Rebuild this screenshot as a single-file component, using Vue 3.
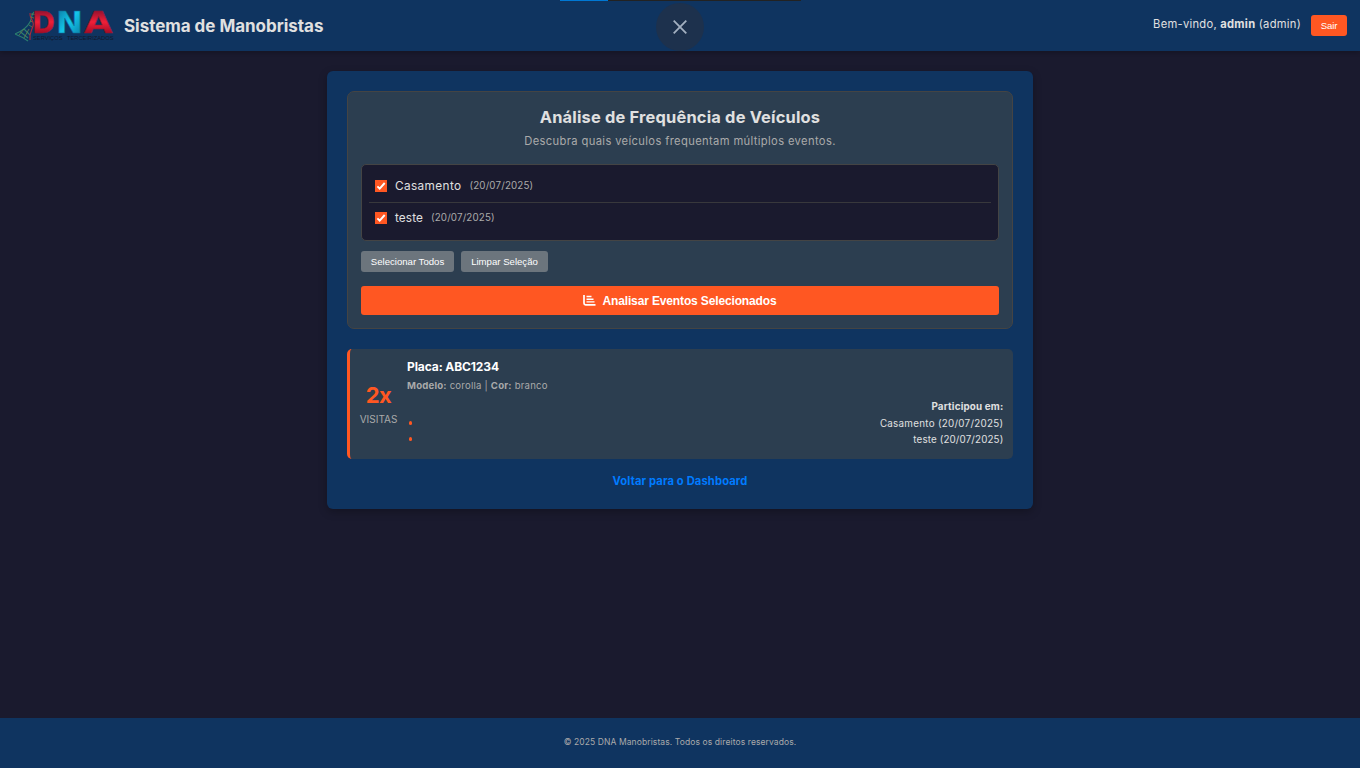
<script setup>
const events = [
  { name: 'Casamento', date: '(20/07/2025)', key: 'casamento' },
  { name: 'teste', date: '(20/07/2025)', key: 'teste' },
]
</script>

<template>
  <div class="page">
    <header class="topbar">
      <div class="brand">
        <svg class="logo" width="102" height="51" viewBox="13 0 102 51">
          <defs>
            <linearGradient id="red" x1="0" y1="0" x2="0" y2="1">
              <stop offset=".2" stop-color="#9c1230" />
              <stop offset=".5" stop-color="#f02038" />
              <stop offset=".8" stop-color="#a80d26" />
            </linearGradient>
            <linearGradient id="cyan" x1="0" y1="0" x2="1" y2="1">
              <stop offset=".1" stop-color="#0b7ca5" />
              <stop offset=".5" stop-color="#14c6ea" />
              <stop offset=".9" stop-color="#0a7fa8" />
            </linearGradient>
          </defs>
          <path d="M15 34C22 31 27 28 30 22C32 18 31 15 34 12M15 34C20 36 24 38 28 41M20 31.500L28 38M24 29L30 35" fill="none" stroke="#2b7f6f" stroke-width="1.1" />
          <path d="M29 25L32 27M30 21L33 22M30 17L34 18M31 14L35 14.500M19 35L24 29M24 38L29 29" stroke="#6b7d4b" stroke-width=".8" />
          <path d="M30 13C29 18 35 21 33 26C32 30 29 33 30 40" fill="none" stroke="#a82a3c" stroke-width="1.1" />
          <g class="logo-letters">
            <text x="32" y="32.500" textLength="23" lengthAdjust="spacingAndGlyphs" fill="url(#red)" stroke="#8f1630">D</text>
            <text x="56" y="32.500" textLength="27" lengthAdjust="spacingAndGlyphs" fill="url(#cyan)" stroke="#0d6d96">N</text>
            <text x="84" y="32.500" textLength="28.500" lengthAdjust="spacingAndGlyphs" fill="url(#red)" stroke="#8f1630">A</text>
          </g>
          <text class="logo-sub" x="33" y="40" textLength="29.500" lengthAdjust="spacingAndGlyphs">SERVIÇOS</text>
          <text class="logo-sub" x="67" y="40" textLength="46.500" lengthAdjust="spacingAndGlyphs">TERCEIRIZADOS</text>
        </svg>
        <h1 class="site-title">Sistema de Manobristas</h1>
      </div>
      <div class="user">
        <span class="welcome">Bem-vindo, <strong>admin</strong> (admin)</span>
        <button class="logout">Sair</button>
      </div>
      <div class="progress"><div class="progress-value"></div></div>
      <div class="close">
        <svg width="14" height="14" viewBox="0 0 14 14"><path d="M.7.7l12.6 12.6M13.3.7L.7 13.3" stroke="#a3b0c1" stroke-width="1.8" /></svg>
      </div>
    </header>

    <main class="content">
      <section class="card">
        <div class="panel">
          <h2 class="panel-title">Análise de Frequência de Veículos</h2>
          <p class="panel-text">Descubra quais veículos frequentam múltiplos eventos.</p>
          <div class="event-list">
            <label v-for="e in events" :key="e.key" class="event">
              <svg class="check" width="12" height="12" viewBox="0 0 12 12"><rect width="12" height="12" fill="#ff5722" /><path d="M2.4 6.4l2.3 2.3 5-5.7" fill="none" stroke="#fff" stroke-width="1.9" /></svg>
              <span :class="['event-name', e.key]">{{ e.name }}</span>
              <span class="event-date">{{ e.date }}</span>
            </label>
          </div>
          <div class="actions">
            <button class="small-btn all">Selecionar Todos</button>
            <button class="small-btn clear">Limpar Seleção</button>
          </div>
          <button class="analyze">
            <svg width="13" height="12" viewBox="0 0 13 12"><path d="M1 0V8.2Q1 9.8 2.6 9.8H12.5" fill="none" stroke="#fff" stroke-width="1.7" /><path d="M3.5 1.5H8.5M3.5 4.2H10.5M3.5 6.9H11.5" stroke="#fff" stroke-width="1.4" /></svg>
            <span>Analisar Eventos Selecionados</span>
          </button>
        </div>

        <article class="result">
          <div class="visits">
            <span class="count">2x</span>
            <span class="visits-label">VISITAS</span>
          </div>
          <div class="details">
            <h3 class="plate">Placa: ABC1234</h3>
            <p class="model"><strong>Modelo:</strong> corolla | <strong>Cor:</strong> branco</p>
            <div class="joined">
              <strong class="joined-title">Participou em:</strong>
              <ul>
                <li v-for="e in events" :key="e.key" :class="e.key"><i class="dot"></i><span>{{ e.name }} {{ e.date }}</span></li>
              </ul>
            </div>
          </div>
        </article>

        <a class="back">Voltar para o Dashboard</a>
      </section>
    </main>

    <footer class="footer">© 2025 DNA Manobristas. Todos os direitos reservados.</footer>
  </div>
</template>

<style>
body { margin: 0; background: #1a1a2e; }
</style>

<style scoped>
* { box-sizing: border-box; }
.page { height: 768px; display: flex; flex-direction: column; background: #1a1a2e; color: #e0e0e0; font-family: Inter, "Open Sans", sans-serif; overflow: hidden; }
h1, h2, h3, p, ul { margin: 0; padding: 0; }
button { border: 0; padding: 0; color: #fff; font-family: "Liberation Sans", Arial, sans-serif; white-space: nowrap; }
.topbar { position: relative; height: 51px; flex: none; display: flex; justify-content: space-between; align-items: center; padding: 0 13px; background: #0f3460; box-shadow: 0 2px 4px rgba(0, 0, 0, .2); }
.brand { display: flex; align-items: center; gap: 9px; }
.logo { display: block; }
.logo-letters { font: bold 30px "DejaVu Sans", sans-serif; stroke-width: .5px; }
.logo-sub { font: 6px "Liberation Sans", sans-serif; fill: #12182b; }
.site-title { font-size: 17px; line-height: 26px; font-weight: 700; letter-spacing: -.03px; white-space: nowrap; }
.user { display: flex; align-items: center; gap: 10px; }
.welcome { font-size: 11.2px; line-height: 17px; letter-spacing: .26px; white-space: nowrap; padding-bottom: 2px; }
.logout { width: 36px; height: 21px; border-radius: 3px; background: #ff5722; font-size: 9.6px; letter-spacing: -.15px; }
.progress { position: absolute; top: 0; left: 560px; width: 241px; height: 1px; background: #222; }
.progress-value { width: 20%; height: 1px; background: #0078d4; }
.close { position: absolute; left: 656px; top: 3px; width: 48px; height: 48px; border-radius: 50%; background: #1d314d; display: flex; align-items: center; justify-content: center; }
.content { flex: 1; padding-top: 20px; }
.card { width: 706px; height: 438px; margin: 0 auto; padding: 20px; border-radius: 6px; background: #0f3460; box-shadow: 0 3px 8px rgba(0, 0, 0, .25); display: flex; flex-direction: column; }
.panel { height: 238px; flex: none; padding: 12px 13px 0; border: 1px solid #444; border-radius: 7px; background: #2c3e50; display: flex; flex-direction: column; }
.panel-title { font-size: 16.4px; line-height: 26px; font-weight: 700; letter-spacing: .2px; text-align: center; }
.panel-text { margin-top: 1px; font-size: 11.2px; line-height: 20px; letter-spacing: .36px; color: #aaa; text-align: center; }
.event-list { margin-top: 13px; height: 77px; padding: 6px 7px; border: 1px solid #444; border-radius: 5px; background: #1a1a2e; }
.event { height: 31px; display: flex; align-items: center; padding: 0 6px 2px; font-size: 11.8px; }
.event:first-child { height: 32px; border-bottom: 1px solid #38383c; }
.event-name { margin-left: 8px; letter-spacing: .1px; }
.event-name.casamento { letter-spacing: .38px; }
.event-date { margin-left: 8px; font-size: 9.8px; letter-spacing: .15px; color: #aaa; }
.actions { margin-top: 10px; display: flex; gap: 7px; }
.small-btn { height: 21px; border-radius: 3px; background: #6c757d; font-size: 9.6px; }
.all { width: 93px; }
.clear { width: 87px; }
.analyze { margin-top: 14px; height: 29px; border-radius: 3px; background: #ff5722; display: flex; align-items: center; justify-content: center; gap: 6px; font-size: 12px; font-weight: 700; letter-spacing: -.14px; }
.result { margin-top: 20px; height: 110px; flex: none; display: flex; border-left: 3px solid #ff5722; border-radius: 5px; background: #2c3e50; padding: 9px 10px 0; }
.visits { width: 37px; flex: none; display: flex; flex-direction: column; align-items: center; padding-top: 21px; }
.count { font-size: 22px; line-height: 33px; font-weight: 700; letter-spacing: -.5px; color: #ff5722; }
.visits-label { font-size: 10px; line-height: 14px; color: #aaa; white-space: nowrap; }
.details { flex: 1; margin-left: 10px; }
.plate { font-size: 12px; line-height: 18px; font-weight: 700; letter-spacing: -.1px; color: #fff; }
.model { margin-top: 1px; font-size: 9.6px; line-height: 18px; letter-spacing: .21px; color: #aaa; }
.joined { font-size: 9.8px; margin: 4px -.4px 0 0; letter-spacing: .29px; display: flex; flex-direction: column; }
.joined-title { line-height: 16px; align-self: flex-end; letter-spacing: .18px; }
ul { list-style: none; }
li { height: 16px; display: flex; align-items: center; justify-content: space-between; }
li.teste { letter-spacing: .14px; }
.dot { width: 3.4px; height: 3.4px; border-radius: 50%; background: #ff5722; margin-left: 1.5px; }
.back { margin-top: 13px; align-self: center; font-size: 11.2px; line-height: 18px; letter-spacing: .13px; font-weight: 700; color: #007bff; }
.footer { height: 50px; flex: none; background: #0f3460; color: #aaa; font-size: 8.5px; line-height: 48px; letter-spacing: .1px; text-align: center; }
</style>
